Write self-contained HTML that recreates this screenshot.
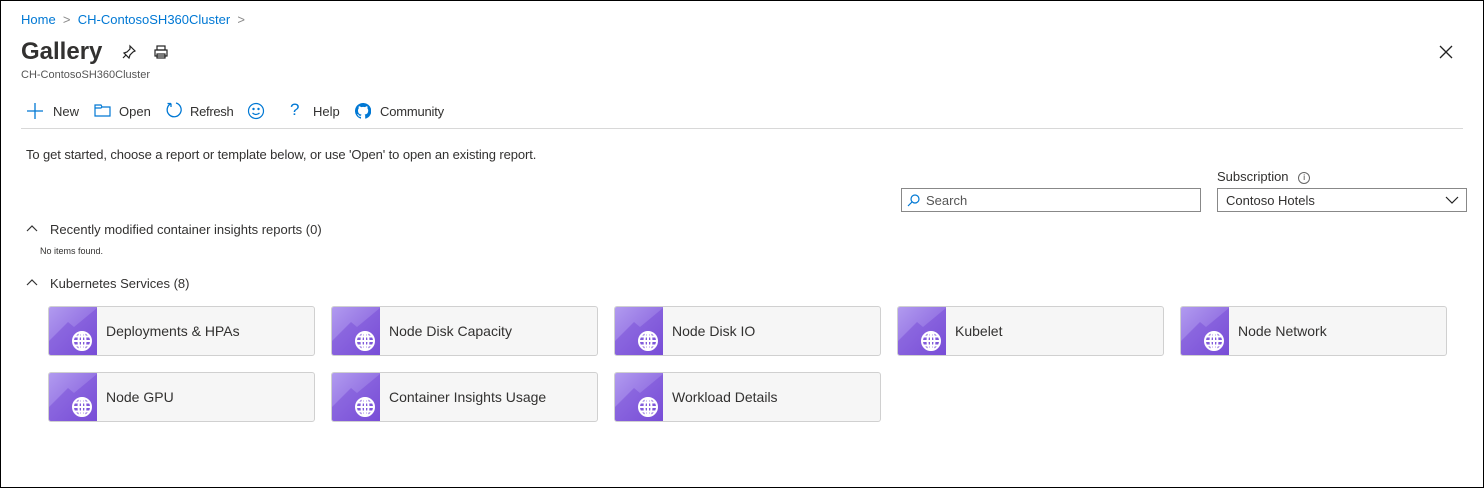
<!DOCTYPE html>
<html><head><meta charset="utf-8"><style>
*{box-sizing:border-box;margin:0;padding:0}
body{width:1484px;height:488px;background:#fff;font-family:"Liberation Sans",sans-serif;color:#323130;position:relative;overflow:hidden}
.a{position:absolute;white-space:nowrap}
.tile{position:absolute;width:267px;height:50px;background:#f6f6f6;border:1px solid #d0d0d0;border-radius:3px;overflow:hidden}
.tile svg{position:absolute;left:-1px;top:-1px}
.tile span{position:absolute;left:57px;top:16px;font-size:14px;color:#323130}
.tb{font-size:13px;top:104px}
</style></head><body>
<div class="a" style="left:0;top:0;width:1484px;height:488px;border:1px solid #000"></div>
<div class="a" style="left:21px;top:12px;font-size:13px;color:#0078d4">Home <span style="color:#888">&nbsp;&gt;&nbsp;</span> CH-ContosoSH360Cluster <span style="color:#888">&nbsp;&gt;</span></div>
<div class="a" style="left:21px;top:38px;font-size:24px;font-weight:bold;color:#323130">Gallery</div>
<svg class="a" style="left:121px;top:44px" width="16" height="16" viewBox="0 0 16 16" fill="none" stroke="#222" stroke-width="1.2"><path d="M9 2l5 5-2 1-3 3-1 3-5-5 3-1 3-3z M5 11l-3 3"/></svg>
<svg class="a" style="left:153px;top:44px" width="16" height="16" viewBox="0 0 16 16" fill="none" stroke="#222" stroke-width="1.2"><rect x="4" y="2" width="8" height="4"/><rect x="2" y="6" width="12" height="6"/><rect x="4" y="10" width="8" height="4"/></svg>
<svg class="a" style="left:1439px;top:45px" width="14" height="14" viewBox="0 0 14 14" stroke="#222" stroke-width="1.3"><path d="M1 1l12 12M13 1L1 13"/></svg>
<div class="a" style="left:21px;top:69px;font-size:11px;color:#555">CH-ContosoSH360Cluster</div>
<svg class="a" style="left:27px;top:103px" width="16" height="16" stroke="#0078d4" stroke-width="1.3"><path d="M8 0v16M0 8h16"/></svg>
<div class="a tb" style="left:53px">New</div>
<svg class="a" style="left:94px;top:104px" width="17" height="13" fill="none" stroke="#0078d4" stroke-width="1.2"><path d="M1 1h6l1 2h8v9H1z M1 4h6l1-1"/></svg>
<div class="a tb" style="left:119px">Open</div>
<svg class="a" style="left:165px;top:101px" width="18" height="18" fill="none" stroke="#0078d4" stroke-width="1.3"><path d="M6 2.5A7 7 0 1 0 11 2 M6 2.5V6 M6 2.5H2.5"/></svg>
<div class="a tb" style="left:190px;letter-spacing:-0.3px">Refresh</div>
<svg class="a" style="left:247px;top:102px" width="18" height="18" fill="none" stroke="#0078d4" stroke-width="1.2"><circle cx="9" cy="9" r="7.5"/><circle cx="6.5" cy="7" r=".6" fill="#0078d4"/><circle cx="11.5" cy="7" r=".6" fill="#0078d4"/><path d="M5.5 11q3.5 3 7 0"/></svg>
<div class="a" style="left:290px;top:100px;font-size:17px;color:#0078d4">?</div>
<div class="a tb" style="left:313px">Help</div>
<svg class="a" style="left:355px;top:103px" width="16" height="16" viewBox="0 0 16 16"><path fill="#0078d4" d="M8 0a8 8 0 0 0-2.5 15.6c.4 0 .5-.2.5-.4v-1.4c-2.2.5-2.7-1-2.7-1-.4-.9-.9-1.2-.9-1.200-.7-.5.1-.5.1-.5.8.1 1.2.8 1.2.8.7 1.3 1.9.9 2.4.7 0-.5.3-.9.5-1.1-1.8-.2-3.6-.9-3.6-4 0-.9.3-1.6.8-2.1-.1-.2-.4-1 .1-2.1 0 0 .7-.2 2.200.8a7.4 7.4 0 0 1 4 0c1.5-1 2.2-.8 2.2-.8.4 1.1.2 1.9.1 2.1.5.6.8 1.3.8 2.1 0 3.1-1.9 3.8-3.6 4 .3.3.6.7.6 1.5v2.2c0 .2.1.5.6.4A8 8 0 0 0 8 0z"/></svg>
<div class="a tb" style="left:380px;letter-spacing:-0.2px">Community</div>
<div class="a" style="left:21px;top:128px;width:1442px;height:1px;background:#d8d8d8"></div>
<div class="a" style="left:26px;top:147px;font-size:13px;letter-spacing:-0.1px">To get started, choose a report or template below, or use 'Open' to open an existing report.</div>
<div class="a" style="left:1217px;top:169px;font-size:13px">Subscription <span style="display:inline-block;width:12px;height:12px;border:1px solid #666;border-radius:50%;font-size:8px;text-align:center;line-height:10px;margin-left:6px;vertical-align:1px">i</span></div>
<div class="a" style="left:901px;top:188px;width:300px;height:24px;border:1px solid #888;"><svg style="position:absolute;left:5px;top:5px" width="13" height="13" fill="none" stroke="#0078d4" stroke-width="1.2"><circle cx="8" cy="5" r="4"/><path d="M5 8l-4 4"/></svg><span style="position:absolute;left:24px;top:4px;font-size:13px;color:#555">Search</span></div>
<div class="a" style="left:1217px;top:188px;width:250px;height:24px;border:1px solid #888;"><span style="position:absolute;left:8px;top:4px;font-size:13px">Contoso Hotels</span><svg style="position:absolute;right:7px;top:7px" width="14" height="8" fill="none" stroke="#222" stroke-width="1.2"><path d="M1 1l6 6 6-6"/></svg></div>
<svg class="a" style="left:26px;top:224px" width="12" height="8" fill="none" stroke="#333" stroke-width="1.2"><path d="M1 7l5-5 5 5"/></svg>
<div class="a" style="left:50px;top:222px;font-size:13px">Recently modified container insights reports (0)</div>
<div class="a" style="left:40px;top:246px;font-size:9px">No items found.</div>
<svg class="a" style="left:26px;top:278px" width="12" height="8" fill="none" stroke="#333" stroke-width="1.2"><path d="M1 7l5-5 5 5"/></svg>
<div class="a" style="left:50px;top:276px;font-size:13px">Kubernetes Services (8)</div>
<svg width="0" height="0" style="position:absolute"><defs>
<linearGradient id="g" x1="0" y1="0" x2="1" y2="1"><stop offset="0" stop-color="#b29cf0"/><stop offset="1" stop-color="#7c52d8"/></linearGradient>
<g id="ic"><rect width="49" height="50" fill="url(#g)"/><path d="M0 36L20 16l6 5L49 2v48H0z" fill="#7446d4" opacity=".45"/><g fill="none" stroke="#fff" stroke-width="2"><circle cx="34" cy="35" r="9"/><ellipse cx="34" cy="35" rx="3.5" ry="9"/><path d="M25 35h18M26.5 30.5h15M26.5 39.5h15M34 26v18"/></g></g></defs></svg>
<div class="tile" style="left:48px;top:306px"><svg width="49" height="50"><use href="#ic"/></svg><span>Deployments &amp; HPAs</span></div>
<div class="tile" style="left:331px;top:306px"><svg width="49" height="50"><use href="#ic"/></svg><span>Node Disk Capacity</span></div>
<div class="tile" style="left:614px;top:306px"><svg width="49" height="50"><use href="#ic"/></svg><span>Node Disk IO</span></div>
<div class="tile" style="left:897px;top:306px"><svg width="49" height="50"><use href="#ic"/></svg><span>Kubelet</span></div>
<div class="tile" style="left:1180px;top:306px"><svg width="49" height="50"><use href="#ic"/></svg><span>Node Network</span></div>
<div class="tile" style="left:48px;top:372px"><svg width="49" height="50"><use href="#ic"/></svg><span>Node GPU</span></div>
<div class="tile" style="left:331px;top:372px"><svg width="49" height="50"><use href="#ic"/></svg><span>Container Insights Usage</span></div>
<div class="tile" style="left:614px;top:372px"><svg width="49" height="50"><use href="#ic"/></svg><span>Workload Details</span></div>
</body></html>
